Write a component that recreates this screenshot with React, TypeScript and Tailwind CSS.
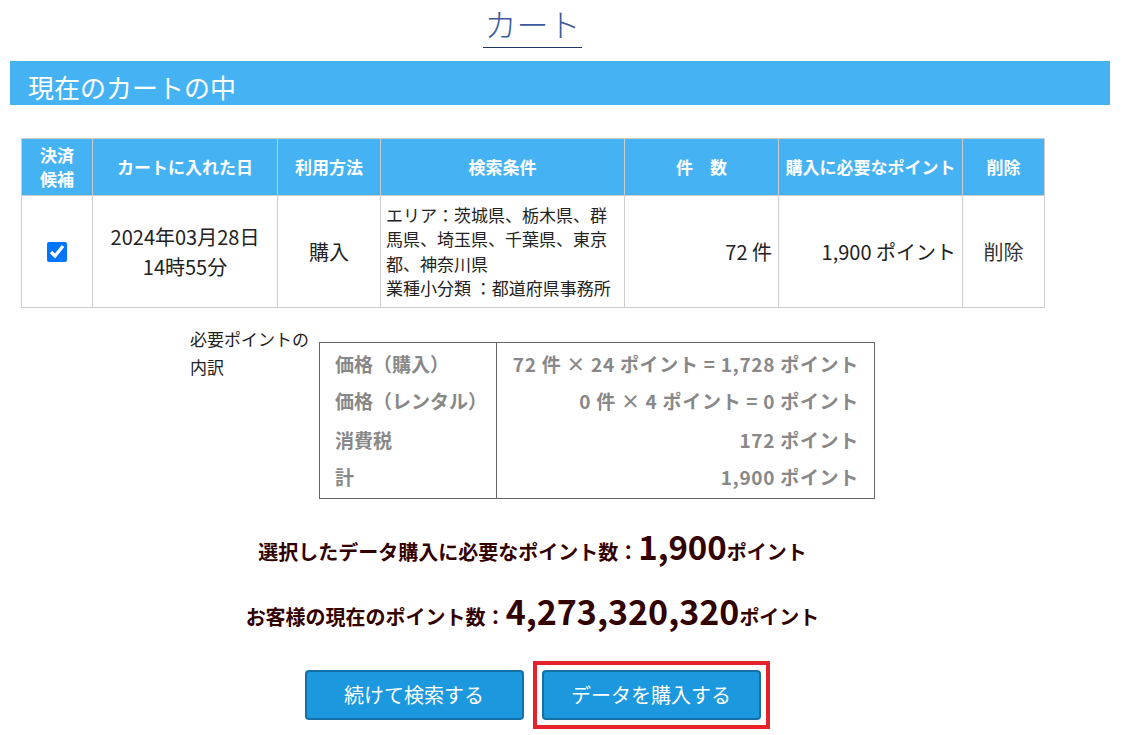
import React from "react";

const font = { fontFamily: '"Noto Sans CJK JP", "Noto Sans", sans-serif' };

const breakdown = [
  ["価格（購入）", "72 件 × 24 ポイント = 1,728 ポイント"],
  ["価格（レンタル）", "0 件 × 4 ポイント = 0 ポイント"],
  ["消費税", "172 ポイント"],
  ["計", "1,900 ポイント"],
];

export default function App() {
  return (
    <div className="min-h-[735px] bg-white text-[#222]" style={font}>
      {/* Page title */}
      <div className="flex w-[1065px] justify-center">
        <h1 className="border-b-[1.5px] border-[#1f3864] px-[1px] text-[32px] leading-[47px] font-light whitespace-nowrap text-[#3b5a9c]">
          カート
        </h1>
      </div>

      {/* Section bar */}
      <div className="mt-[13px] ml-[10px] flex h-[44px] w-[1100px] items-end bg-[#45b3f3] pb-[1px] pl-[18px]">
        <h2 className="text-[26px] leading-[34px] font-normal text-white">現在のカートの中</h2>
      </div>

      {/* Cart table */}
      <table className="mt-[33px] ml-[21px] w-[1023px] table-fixed border-collapse text-center">
        <colgroup>
          <col className="w-[71px]" />
          <col className="w-[185px]" />
          <col className="w-[103px]" />
          <col className="w-[244px]" />
          <col className="w-[154px]" />
          <col className="w-[184px]" />
          <col className="w-[82px]" />
        </colgroup>
        <thead>
          <tr className="h-[57px] bg-[#45b3f3] text-[17px] leading-[24px] font-bold text-white">
            <th className="border border-[#cccccc]">
              決済
              <br />
              候補
            </th>
            <th className="border border-[#cccccc]">カートに入れた日</th>
            <th className="border border-[#cccccc]">利用方法</th>
            <th className="border border-[#cccccc]">検索条件</th>
            <th className="border border-[#cccccc]">件　数</th>
            <th className="border border-[#cccccc] px-0 whitespace-nowrap">購入に必要なポイント</th>
            <th className="border border-[#cccccc]">削除</th>
          </tr>
        </thead>
        <tbody>
          <tr className="h-[112px] text-[20px] leading-[30px] text-[#222]">
            <td className="border border-[#cccccc]">
              <input
                type="checkbox"
                checked
                readOnly
                className="mx-auto block h-[20px] w-[20px] accent-[#0075ff]"
              />
            </td>
            <td className="border border-[#cccccc]">
              2024年03月28日
              <br />
              14時55分
            </td>
            <td className="border border-[#cccccc]">購入</td>
            <td className="border border-[#cccccc] pr-[10px] pl-[5px] text-left text-[17px] leading-[24.5px]">
              エリア：茨城県、栃木県、群馬県、埼玉県、千葉県、東京都、神奈川県
              <br />
              業種小分類 ：都道府県事務所
            </td>
            <td className="border border-[#cccccc] pr-[6px] text-right">72 件</td>
            <td className="border border-[#cccccc] pr-[6px] text-right">1,900 ポイント</td>
            <td className="border border-[#cccccc] text-[#333]">削除</td>
          </tr>
        </tbody>
      </table>

      {/* Point breakdown */}
      <div className="mt-[17px] flex w-[1065px] justify-center">
        <div className="flex">
          <p className="w-[129px] text-[17px] leading-[28px] text-[#222]">
            必要ポイントの
            <br />
            内訳
          </p>
          <table className="mt-[17px] w-[555px] table-fixed border-collapse text-[19px] font-bold text-[#888888]">
            <colgroup>
              <col className="w-[177px]" />
              <col className="w-[378px]" />
            </colgroup>
            <tbody>
              {breakdown.map(([label, value], i) => (
                <tr key={label} className="h-[39px]">
                  <td
                    className={`border-r border-l border-[#666666] pl-[15px] ${i === 0 ? "border-t pt-[4px]" : ""} ${
                      i === breakdown.length - 1 ? "border-b pb-[4px]" : ""
                    }`}
                  >
                    {label}
                  </td>
                  <td
                    className={`border-r border-[#666666] pr-[15px] text-right tracking-[0.7px] ${
                      i === 0 ? "border-t pt-[4px]" : ""
                    } ${i === breakdown.length - 1 ? "border-b pb-[4px]" : ""}`}
                  >
                    {value}
                  </td>
                </tr>
              ))}
            </tbody>
          </table>
        </div>
      </div>

      {/* Totals */}
      <div className="flex w-[1065px] flex-col items-center font-bold text-[#330000]">
        <p className="mt-[25px] flex items-baseline text-[20px] leading-[44px]">
          選択したデータ購入に必要なポイント数：
          <span className="text-[33px]">1,900</span>
          ポイント
        </p>
        <p className="mt-[15px] flex items-baseline text-[20px] leading-[44px]">
          お客様の現在のポイント数：
          <span className="text-[34px]">4,273,320,320</span>
          ポイント
        </p>
      </div>

      {/* Actions */}
      <div className="mt-[22px] flex w-[1065px] items-center justify-center gap-[9px] pl-[9px]">
        <button className="h-[50px] w-[219px] rounded-[4px] border-2 border-[#1670a8] bg-[#1b98de] text-[20px] text-white">
          続けて検索する
        </button>
        <div className="border-[4px] border-[#e8202a] p-[5px]">
          <button className="block h-[50px] w-[219px] rounded-[4px] border-2 border-[#1670a8] bg-[#1b98de] text-[20px] text-white">
            データを購入する
          </button>
        </div>
      </div>
    </div>
  );
}
